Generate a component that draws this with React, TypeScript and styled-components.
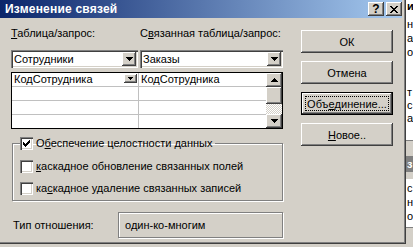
import React from 'react';
import styled, { createGlobalStyle } from 'styled-components';

const Global = createGlobalStyle`
  html, body { margin: 0; padding: 0; background: #d4d0c8; overflow: hidden; }
  body { font-family: "Liberation Sans", Arial, sans-serif; font-size: 11px; color: #000; }
  * { box-sizing: border-box; }
`;

const Screen = styled.div`
  width: 413px;
  height: 247px;
  display: flex;
  overflow: hidden;
  background: #d4d0c8;
`;

const Window = styled.div`
  width: 406px;
  height: 244px;
  flex: none;
  border-right: 1px solid #404040;
  border-bottom: 1px solid #404040;
`;

const Frame = styled.div`
  width: 100%;
  height: 100%;
  background: #d4d0c8;
  border-right: 1px solid #808080;
  border-bottom: 1px solid #808080;
  padding-right: 2px;
  display: flex;
  flex-direction: column;
`;

const TitleBar = styled.div`
  height: 18px;
  flex: none;
  display: flex;
  align-items: center;
  padding: 0 0 0 5px;
  background: linear-gradient(to right, #0a246a, #a6caf0);
`;

const Title = styled.div`
  flex: 1;
  color: #fff;
  font-weight: bold;
  font-size: 12px;
  letter-spacing: 0.2px;
  line-height: 14px;
`;

const CaptionButton = styled.div<{ $gap: number }>`
  width: 16px;
  height: 14px;
  margin-left: ${(p) => p.$gap}px;
  background: #d4d0c8;
  box-shadow: inset -1px -1px #404040, inset 1px 1px #fff, inset -2px -2px #808080;
  display: flex;
  align-items: center;
  justify-content: center;
  font-weight: bold;
  font-size: 12px;
  line-height: 1;
`;

const Body = styled.div`
  flex: 1;
  display: flex;
  padding: 9px 0 0 11px;
`;

const LeftCol = styled.div`
  width: 272px;
  display: flex;
  flex-direction: column;
`;

const RightCol = styled.div`
  width: 92px;
  margin-left: 18px;
  padding-top: 3px;
  display: flex;
  flex-direction: column;
  gap: 8px;
`;

const LabelRow = styled.div`
  display: grid;
  grid-template-columns: 129px 1fr;
  height: 13px;
  line-height: 13px;
  white-space: nowrap;
`;

const U = styled.span`
  text-decoration: underline;
`;

const ComboRow = styled.div`
  display: flex;
  gap: 2px;
  margin-top: 10px;
`;

const Combo = styled.div<{ $w: number }>`
  width: ${(p) => p.$w}px;
  height: 18px;
  background: #fff;
  box-shadow: inset 1px 1px #808080, inset 2px 2px #404040, inset -1px -1px #fff, inset -2px -2px #d4d0c8;
  display: flex;
  align-items: center;
  padding: 2px 2px 2px 3px;
`;

const ComboText = styled.div`
  flex: 1;
  line-height: 13px;
`;

const DropButton = styled.div<{ $small?: boolean }>`
  width: ${(p) => (p.$small ? 13 : 14)}px;
  height: ${(p) => (p.$small ? 9 : 14)}px;
  margin-right: ${(p) => (p.$small ? 1 : 0)}px;
  align-self: ${(p) => (p.$small ? 'flex-start' : 'center')};
  margin-top: ${(p) => (p.$small ? 1 : 0)}px;
  flex: none;
  background: #d4d0c8;
  box-shadow: inset -1px -1px #404040, inset 1px 1px #fff, inset -2px -2px #808080;
  display: flex;
  align-items: center;
  justify-content: center;
`;

const Arrow = ({ up, small }: { up?: boolean; small?: boolean }) => {
  const rows = small ? [5, 3, 1] : [7, 5, 3, 1];
  const w = rows[0];
  const list = up ? [...rows].reverse() : rows;
  return (
    <svg width={w} height={rows.length} viewBox={`0 0 ${w} ${rows.length}`} shapeRendering="crispEdges">
      {list.map((n, i) => (
        <rect key={i} x={(w - n) / 2} y={i} width={n} height={1} fill="#000" />
      ))}
    </svg>
  );
};

const Grid = styled.div`
  margin-top: 4px;
  height: 57px;
  border: 1px solid #000;
  background: #fff;
  display: flex;
  overflow: hidden;
`;

const Table = styled.div`
  flex: 1;
  display: grid;
  grid-template-columns: 127px 1fr;
  grid-auto-rows: 14px;
`;

const Cell = styled.div<{ $first?: boolean }>`
  border-bottom: 1px solid #c0c0c0;
  border-right: ${(p) => (p.$first ? '1px solid #c0c0c0' : 'none')};
  display: flex;
  align-items: center;
  padding-left: 2px;
  line-height: 13px;
`;

const CellText = styled.div`
  flex: 1;
`;

const ScrollBar = styled.div`
  width: 16px;
  display: flex;
  flex-direction: column;
`;

const ScrollBtn = styled.div`
  height: 14px;
  flex: none;
  background: #d4d0c8;
  box-shadow: inset -1px -1px #404040, inset 1px 1px #fff, inset -2px -2px #808080;
  display: flex;
  align-items: center;
  justify-content: center;
`;

const Thumb = styled.div`
  height: 17px;
  flex: none;
  background: #d4d0c8;
  box-shadow: inset -1px -1px #404040, inset 1px 1px #fff, inset -2px -2px #808080;
`;

const Track = styled.div`
  flex: 1;
  background-color: #fff;
  background-image: linear-gradient(45deg, #d4d0c8 25%, transparent 25%, transparent 75%, #d4d0c8 75%),
    linear-gradient(45deg, #d4d0c8 25%, transparent 25%, transparent 75%, #d4d0c8 75%);
  background-size: 2px 2px;
  background-position: 0 0, 1px 1px;
`;

const Group = styled.fieldset`
  margin: 8px 0 0 1px;
  padding: 0 0 0 7px;
  height: 64px;
  width: 271px;
  border: 1px solid #808080;
  box-shadow: 1px 1px 0 #fff, inset 1px 1px 0 #fff;
`;

const Legend = styled.legend`
  padding: 0 3px 0 0;
  margin-left: 0;
`;

const CheckRow = styled.label<{ $gap?: number }>`
  display: flex;
  align-items: center;
  gap: 3px;
  line-height: 13px;
  height: 13px;
  white-space: nowrap;
  margin-top: ${(p) => p.$gap ?? 0}px;
`;

const Box = styled.span`
  width: 13px;
  height: 13px;
  flex: none;
  background: #fff;
  box-shadow: inset 1px 1px #808080, inset 2px 2px #404040, inset -1px -1px #fff, inset -2px -2px #d4d0c8;
  display: flex;
  align-items: center;
  justify-content: center;
`;

const Check = () => (
  <svg width="7" height="7" viewBox="0 0 7 7" shapeRendering="crispEdges">
    {[2, 3, 4, 3, 2, 1, 0].map((y, x) => (
      <rect key={x} x={x} y={y} width={1} height={3} fill="#000" />
    ))}
  </svg>
);

const CloseIcon = () => {
  const rows = [
    [0, 1, 6, 7],
    [1, 2, 5, 6],
    [2, 3, 4, 5],
    [3, 4],
    [2, 3, 4, 5],
    [1, 2, 5, 6],
    [0, 1, 6, 7],
  ];
  return (
    <svg width="8" height="7" viewBox="0 0 8 7" shapeRendering="crispEdges">
      {rows.flatMap((xs, y) => xs.map((x) => <rect key={`${x}-${y}`} x={x} y={y} width={1} height={1} fill="#000" />))}
    </svg>
  );
};

const TypeRow = styled.div`
  margin-top: 11px;
  display: flex;
  align-items: center;
`;

const TypeLabel = styled.div`
  width: 107px;
  padding-left: 2px;
`;

const TypeField = styled.div`
  flex: 1;
  height: 26px;
  border: 1px solid #808080;
  box-shadow: 1px 1px 0 #fff, inset 1px 1px 0 #fff;
  display: flex;
  align-items: center;
  padding-left: 6px;
`;

const Button = styled.div<{ $default?: boolean }>`
  height: 23px;
  flex: none;
  background: #d4d0c8;
  display: flex;
  align-items: center;
  justify-content: center;
  padding: ${(p) => (p.$default ? '4px' : '0')};
  box-shadow: ${(p) =>
    p.$default
      ? 'inset 0 0 0 1px #000, inset -2px -2px #404040, inset 2px 2px #fff, inset -3px -3px #808080'
      : 'inset -1px -1px #404040, inset 1px 1px #fff, inset -2px -2px #808080'};
`;

const Focus = styled.span`
  flex: 1;
  align-self: stretch;
  outline: 1px dotted #000;
  outline-offset: -1px;
  display: flex;
  align-items: center;
  justify-content: center;
  white-space: nowrap;
`;

const Behind = styled.div`
  flex: 1;
  height: 247px;
  display: flex;
  flex-direction: column;
  overflow: hidden;
  white-space: nowrap;
  line-height: 13px;
`;

const Paper = styled.div<{ $h: number }>`
  height: ${(p) => p.$h}px;
  flex: none;
  background: #fff;
  padding-left: 1px;
  border-bottom: 1px solid #808080;
`;

const Band = styled.div<{ $h: number }>`
  height: ${(p) => p.$h}px;
  flex: none;
  background: #d4d0c8;
  padding-top: 15px;
`;

const Tag = styled.div`
  background: #808080;
  color: #fff;
  font-weight: bold;
  height: 16px;
  line-height: 16px;
  padding-left: 1px;
`;

const Line = styled.div<{ $mt?: number; $bold?: boolean }>`
  margin-top: ${(p) => p.$mt ?? 0}px;
  font-weight: ${(p) => (p.$bold ? 'bold' : 'normal')};
`;

export default function App() {
  return (
    <>
      <Global />
      <Screen>
        <Window>
          <Frame>
            <TitleBar>
              <Title>Изменение связей</Title>
              <CaptionButton $gap={0}>?</CaptionButton>
              <CaptionButton $gap={2}>
                <CloseIcon />
              </CaptionButton>
            </TitleBar>
            <Body>
              <LeftCol>
                <LabelRow>
                  <div>
                    <U>Т</U>аблица/запрос:
                  </div>
                  <div>
                    С<U>в</U>язанная таблица/запрос:
                  </div>
                </LabelRow>
                <ComboRow>
                  <Combo $w={127}>
                    <ComboText>Сотрудники</ComboText>
                    <DropButton>
                      <Arrow />
                    </DropButton>
                  </Combo>
                  <Combo $w={143}>
                    <ComboText>Заказы</ComboText>
                    <DropButton>
                      <Arrow />
                    </DropButton>
                  </Combo>
                </ComboRow>
                <Grid>
                  <Table>
                    <Cell $first>
                      <CellText>КодСотрудника</CellText>
                      <DropButton $small>
                        <Arrow small />
                      </DropButton>
                    </Cell>
                    <Cell>КодСотрудника</Cell>
                    <Cell $first />
                    <Cell />
                    <Cell $first />
                    <Cell />
                    <Cell $first />
                    <Cell />
                  </Table>
                  <ScrollBar>
                    <ScrollBtn>
                      <Arrow up />
                    </ScrollBtn>
                    <Thumb />
                    <Track />
                    <ScrollBtn>
                      <Arrow />
                    </ScrollBtn>
                  </ScrollBar>
                </Grid>
                <Group>
                  <Legend>
                    <CheckRow>
                      <Box>
                        <Check />
                      </Box>
                      <span>
                        О<U>б</U>еспечение целостности данных
                      </span>
                    </CheckRow>
                  </Legend>
                  <CheckRow $gap={10}>
                    <Box />
                    <span>
                      <U>к</U>аскадное обновление связанных полей
                    </span>
                  </CheckRow>
                  <CheckRow $gap={9}>
                    <Box />
                    <span>
                      ка<U>с</U>кадное удаление связанных записей
                    </span>
                  </CheckRow>
                </Group>
                <TypeRow>
                  <TypeLabel>Тип отношения:</TypeLabel>
                  <TypeField>один-ко-многим</TypeField>
                </TypeRow>
              </LeftCol>
              <RightCol>
                <Button>ОК</Button>
                <Button>Отмена</Button>
                <Button $default>
                  <Focus>
                    Объ<U>е</U>динение...
                  </Focus>
                </Button>
                <Button>
                  <span>
                    <U>Н</U>овое..
                  </span>
                </Button>
              </RightCol>
            </Body>
          </Frame>
        </Window>
        <Behind>
          <Paper $h={141}>
            <Line $bold>и</Line>
            <Line $mt={5}>н</Line>
            <Line $mt={1}>а</Line>
            <Line $mt={1}>о</Line>
            <Line $mt={27}>т</Line>
            <Line>с</Line>
            <Line>а</Line>
          </Paper>
          <Band $h={38}>
            <Tag>з</Tag>
          </Band>
          <Paper $h={49}>
            <Line $mt={3}>с</Line>
            <Line $mt={1}>н</Line>
            <Line $mt={1}>о</Line>
          </Paper>
        </Behind>
      </Screen>
    </>
  );
}
